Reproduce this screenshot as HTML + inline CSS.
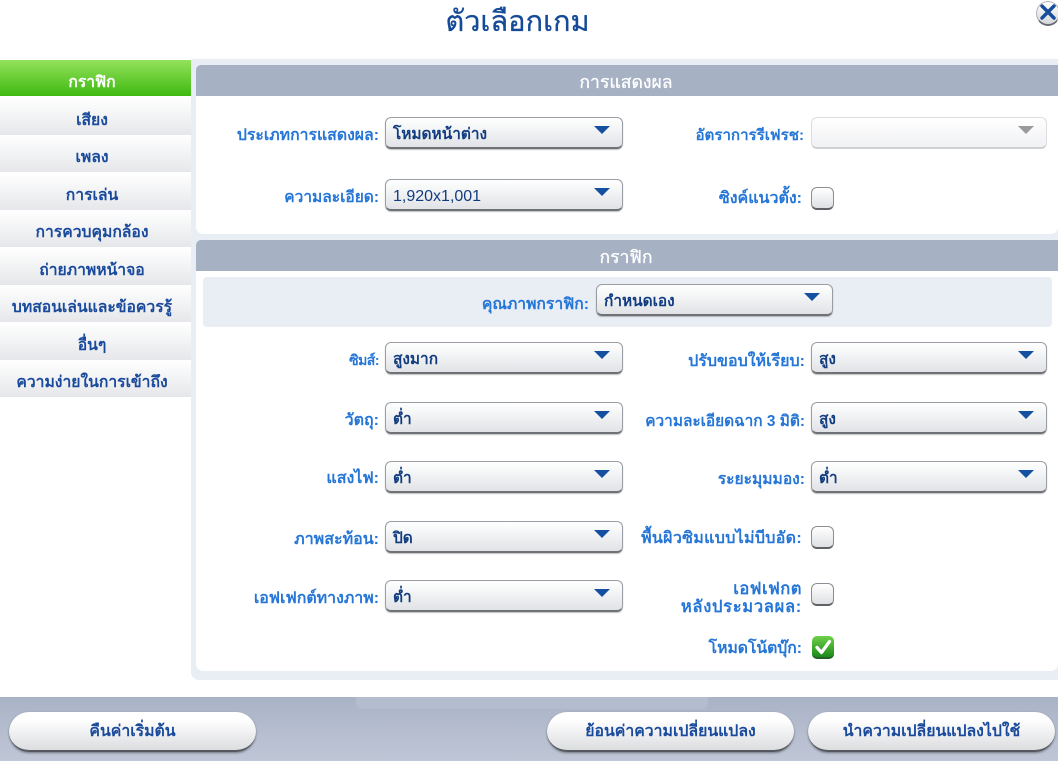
<!DOCTYPE html>
<html lang="th"><head><meta charset="utf-8"><title>ตัวเลือกเกม</title>
<style>
html,body{margin:0;padding:0;width:1058px;height:761px;overflow:hidden;background:#fff;font-family:"Liberation Sans","DejaVu Sans",sans-serif;}
div{position:absolute;box-sizing:border-box;}
.title{left:300px;width:435px;top:1px;height:42px;line-height:42px;text-align:center;font-size:29px;color:#144a96;-webkit-text-stroke:.3px #144a96;}
.nav{left:0;width:191px;height:37px;line-height:46px;text-align:center;font-size:15.7px;font-weight:bold;color:#1a4a9c;background:linear-gradient(#fff,#e6e7ea);white-space:nowrap;padding-right:7px;overflow:visible;}
.nav.on{background:linear-gradient(#93e25a,#3fb912);color:#fff;height:36px;line-height:45px;}
.outer{left:191px;top:59px;width:867px;height:621px;background:#e9edf4;border-radius:0 0 0 8px;}
.panel{left:196px;width:862px;background:#fff;border-radius:7px 0 7px 7px;}
.hd{left:196px;width:862px;height:31px;background:#a6b1c3;border-radius:5px 0 0 0;color:#fff;text-align:center;font-size:17.6px;line-height:34px;-webkit-text-stroke:.3px #fff;padding-right:2px;}
.lb{text-align:right;color:#2576d6;font-size:15.8px;font-weight:bold;white-space:nowrap;height:20px;line-height:22px;}
.dd{width:238px;height:32px;border-radius:6px;background:linear-gradient(#fff,#e2e3e6);border:1px solid #9a9da3;border-bottom:2px solid #6e7176;box-shadow:0 1px 1px rgba(0,0,0,.25);color:#123c80;font-size:15.4px;font-weight:bold;line-height:34px;padding-left:7px;white-space:nowrap;}
.dd:after{content:"";position:absolute;right:12px;top:8px;width:0;height:0;border-left:8px solid transparent;border-right:8px solid transparent;border-top:8px solid #14509f;}
.dd.off{border:1px solid #dcdde0;border-bottom:2px solid #cfd0d4;box-shadow:none;background:linear-gradient(#fff,#f0f1f3);}
.dd.off:after{border-top-color:#9a9a9e;}
.cb{left:811px;width:23px;height:23px;border-radius:6px;background:linear-gradient(#fff,#dfe0e3);border:1px solid #8b8d92;border-bottom:2px solid #5f6165;}
.btn{height:40px;top:712px;border-radius:20px;background:linear-gradient(#fff 20%,#dcdde0);border-bottom:2px solid #55585e;box-shadow:0 1px 2px rgba(0,0,0,.4);text-align:center;line-height:40px;color:#1a4a9c;font-size:15.8px;font-weight:bold;white-space:nowrap;}
</style></head><body>
<div class="title">ตัวเลือกเกม</div>
<div style="left:1036px;top:1px;width:24px;height:25px;border-radius:50%;background:linear-gradient(#fff,#d5d7dc);border:1px solid #b0b4bc;border-bottom:2px solid #676b73;"></div>
<svg style="position:absolute;left:1039px;top:4px" width="19" height="17" viewBox="0 0 19 17"><path d="M3 2L15 14M15 2L3 14" stroke="#174c9b" stroke-width="3.4" stroke-linecap="round"/></svg>

<div class="nav on" style="top:60px">กราฟิก</div>
<div class="nav" style="top:98px">เสียง</div>
<div class="nav" style="top:135px">เพลง</div>
<div class="nav" style="top:173px">การเล่น</div>
<div class="nav" style="top:210px">การควบคุมกล้อง</div>
<div class="nav" style="top:248px">ถ่ายภาพหน้าจอ</div>
<div class="nav" style="top:285px">บทสอนเล่นและข้อควรรู้</div>
<div class="nav" style="top:323px">อื่นๆ</div>
<div class="nav" style="top:360px">ความง่ายในการเข้าถึง</div>

<div class="outer"></div>
<div class="panel" style="top:65px;height:169px"></div>
<div class="hd" style="top:65px">การแสดงผล</div>
<div class="panel" style="top:240px;height:431px"></div>
<div class="hd" style="top:240px">กราฟิก</div>
<div style="left:203px;top:277px;width:849px;height:50px;background:#e9edf4;border-radius:4px"></div>

<div class="lb" style="left:196px;width:183px;top:125px">ประเภทการแสดงผล:</div>
<div class="dd" style="left:385px;top:117px">โหมดหน้าต่าง</div>
<div class="lb" style="left:640px;width:164px;top:125px;font-size:15.1px">อัตราการรีเฟรช:</div>
<div class="dd off" style="left:811px;top:117px;width:236px"></div>
<div class="lb" style="left:196px;width:183px;top:187px;font-size:15.5px">ความละเอียด:</div>
<div class="dd" style="left:385px;top:179px;font-weight:normal;font-size:16px">1,920x1,001</div>
<div class="lb" style="left:640px;width:162px;top:188px;font-size:16px">ซิงค์แนวตั้ง:</div>
<div class="cb" style="top:187px"></div>

<div class="lb" style="left:400px;width:189px;top:294px;font-size:15.7px">คุณภาพกราฟิก:</div>
<div class="dd" style="left:596px;top:284px;width:237px">กำหนดเอง</div>

<div class="lb" style="left:196px;width:183px;top:349px;font-size:14px;letter-spacing:-.5px">ซิมส์:</div>
<div class="dd" style="left:385px;top:342px">สูงมาก</div>
<div class="lb" style="left:640px;width:165px;top:351px;font-size:16px">ปรับขอบให้เรียบ:</div>
<div class="dd" style="left:811px;top:342px;width:236px">สูง</div>

<div class="lb" style="left:196px;width:183px;top:410px;font-size:16px">วัตถุ:</div>
<div class="dd" style="left:385px;top:402px">ต่ำ</div>
<div class="lb" style="left:630px;width:175px;top:411px;font-size:15.4px">ความละเอียดฉาก 3 มิติ:</div>
<div class="dd" style="left:811px;top:402px;width:236px">สูง</div>

<div class="lb" style="left:196px;width:183px;top:468px;font-size:16px">แสงไฟ:</div>
<div class="dd" style="left:385px;top:461px">ต่ำ</div>
<div class="lb" style="left:640px;width:165px;top:469px;font-size:15.6px">ระยะมุมมอง:</div>
<div class="dd" style="left:811px;top:461px;width:236px">ต่ำ</div>

<div class="lb" style="left:196px;width:183px;top:529px;font-size:16px">ภาพสะท้อน:</div>
<div class="dd" style="left:385px;top:521px">ปิด</div>
<div class="lb" style="left:630px;width:172px;top:528px;font-size:16px;letter-spacing:.3px">พื้นผิวซิมแบบไม่บีบอัด:</div>
<div class="cb" style="top:526px"></div>

<div class="lb" style="left:196px;width:183px;top:588px;font-size:15.9px">เอฟเฟกต์ทางภาพ:</div>
<div class="dd" style="left:385px;top:580px">ต่ำ</div>
<div class="lb" style="left:640px;width:162px;top:578px;font-size:16.5px;letter-spacing:.5px">เอฟเฟกต</div>
<div class="lb" style="left:640px;width:162px;top:596px;font-size:16.5px;letter-spacing:.7px">หลังประมวลผล:</div>
<div class="cb" style="top:583px"></div>

<div class="lb" style="left:640px;width:162px;top:638px;font-size:15.7px">โหมดโน้ตบุ๊ก:</div>
<div style="left:812px;top:636px;width:22px;height:23px;border-radius:5px;background:linear-gradient(#6fd04a,#1c8a1a);border-bottom:2px solid #24602a;"></div>
<svg style="position:absolute;left:812px;top:636px" width="22" height="22" viewBox="0 0 22 22"><path d="M5 11.5L9.5 16.5L17.5 5.5" fill="none" stroke="#fff" stroke-width="3.2" stroke-linecap="round" stroke-linejoin="round"/></svg>

<div style="left:0;top:697px;width:1058px;height:64px;background:linear-gradient(#a9b3c6,#bfc6d6)"></div>
<div style="left:356px;top:697px;width:352px;height:12px;background:#b4bdce;border-radius:0 0 6px 6px"></div>
<div class="btn" style="left:9px;width:247px">คืนค่าเริ่มต้น</div>
<div class="btn" style="left:547px;width:247px">ย้อนค่าความเปลี่ยนแปลง</div>
<div class="btn" style="left:808px;width:247px">นำความเปลี่ยนแปลงไปใช้</div>
</body></html>
